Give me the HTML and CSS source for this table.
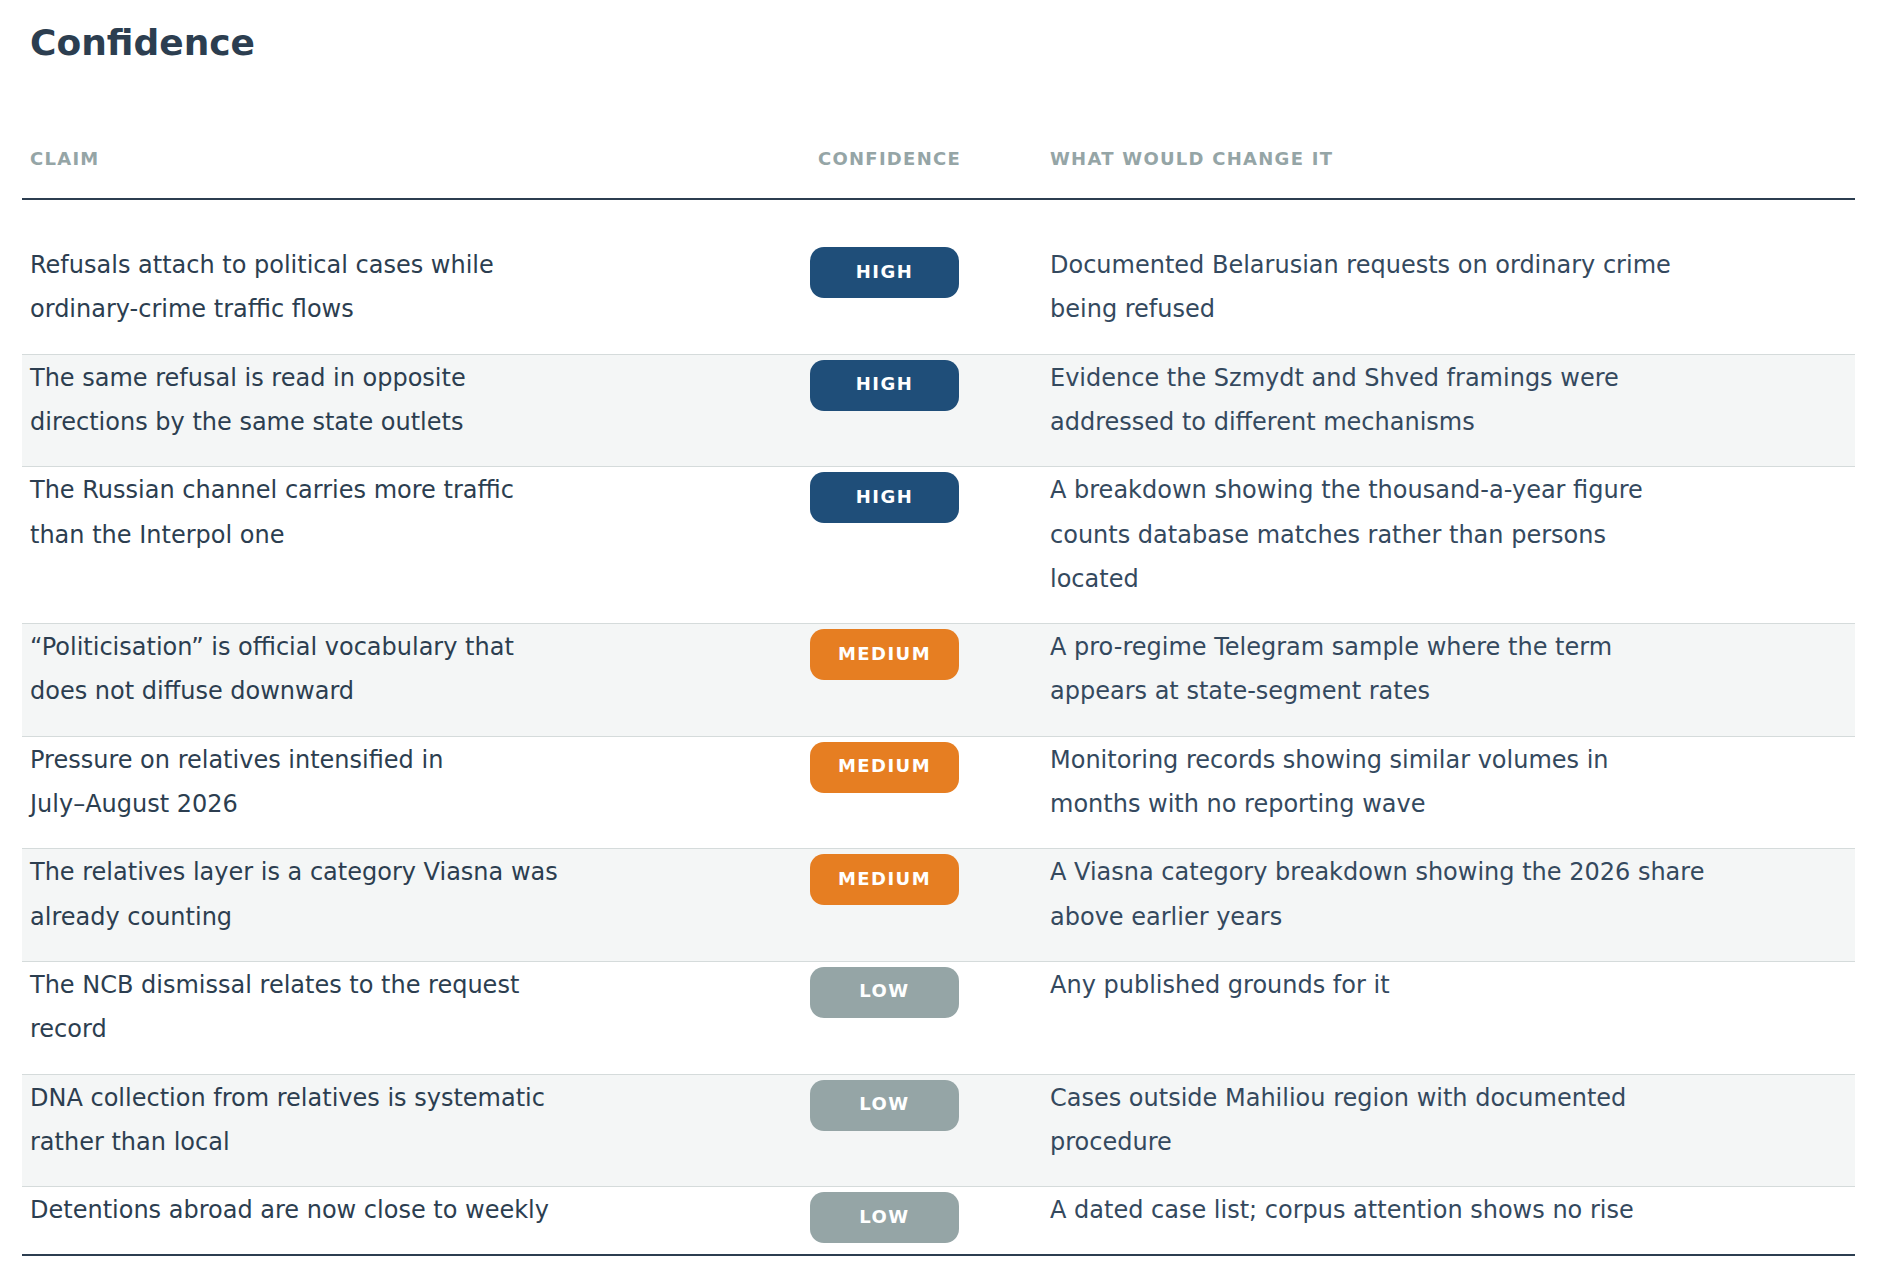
FILE: index.html
```html
<!DOCTYPE html>
<html lang="en">
<head>
<meta charset="utf-8">
<title>Confidence</title>
<link rel="stylesheet" href="styles.css">
</head>
<body>
<div class="page">
  <h1 class="title">Confidence</h1>
  <div class="table">
    <div class="row head">
      <div class="cell">Claim</div>
      <div class="cell">Confidence</div>
      <div class="cell">What would change it</div>
    </div>
    <div class="tbody">
      <div class="row">
        <div class="cell claim"><p class="txt">Refusals attach to political cases while ordinary-crime traffic flows</p></div>
        <div class="cell conf"><span class="badge high">High</span></div>
        <div class="cell change"><p class="txt">Documented Belarusian requests on ordinary crime being refused</p></div>
      </div>
      <div class="row">
        <div class="cell claim"><p class="txt">The same refusal is read in opposite directions by the same state outlets</p></div>
        <div class="cell conf"><span class="badge high">High</span></div>
        <div class="cell change"><p class="txt">Evidence the Szmydt and Shved framings were addressed to different mechanisms</p></div>
      </div>
      <div class="row">
        <div class="cell claim"><p class="txt">The Russian channel carries more traffic than the Interpol one</p></div>
        <div class="cell conf"><span class="badge high">High</span></div>
        <div class="cell change"><p class="txt">A breakdown showing the thousand-a-year figure counts database matches rather than persons<br>located</p></div>
      </div>
      <div class="row">
        <div class="cell claim"><p class="txt">“Politicisation” is official vocabulary that does not diffuse downward</p></div>
        <div class="cell conf"><span class="badge medium">Medium</span></div>
        <div class="cell change"><p class="txt">A pro-regime Telegram sample where the term appears at state-segment rates</p></div>
      </div>
      <div class="row">
        <div class="cell claim"><p class="txt">Pressure on relatives intensified in <span class="nowrap">July–August</span> 2026</p></div>
        <div class="cell conf"><span class="badge medium">Medium</span></div>
        <div class="cell change"><p class="txt">Monitoring records showing similar volumes in<br>months with no reporting wave</p></div>
      </div>
      <div class="row">
        <div class="cell claim"><p class="txt">The relatives layer is a category Viasna was already counting</p></div>
        <div class="cell conf"><span class="badge medium">Medium</span></div>
        <div class="cell change"><p class="txt">A Viasna category breakdown showing the 2026 share above earlier years</p></div>
      </div>
      <div class="row">
        <div class="cell claim"><p class="txt">The NCB dismissal relates to the request record</p></div>
        <div class="cell conf"><span class="badge low">Low</span></div>
        <div class="cell change"><p class="txt">Any published grounds for it</p></div>
      </div>
      <div class="row">
        <div class="cell claim"><p class="txt">DNA collection from relatives is systematic rather than local</p></div>
        <div class="cell conf"><span class="badge low">Low</span></div>
        <div class="cell change"><p class="txt">Cases outside Mahiliou region with documented procedure</p></div>
      </div>
      <div class="row">
        <div class="cell claim"><p class="txt">Detentions abroad are now close to weekly</p></div>
        <div class="cell conf"><span class="badge low">Low</span></div>
        <div class="cell change"><p class="txt">A dated case list; corpus attention shows no rise</p></div>
      </div>
    </div>
  </div>
</div>
</body>
</html>
```
FILE: styles.css
```css
html, body {
  margin: 0;
  padding: 0;
  background: #ffffff;
}

body {
  font-family: "DejaVu Sans", Verdana, sans-serif;
  color: #2c3e50;
}

.page {
  padding: 21.5px 35px 20px 22px;
}

.title {
  margin: 0 0 56px;
  padding-left: 8px;
  font-size: 36px;
  line-height: 42px;
  font-weight: 700;
  color: #2c3e50;
}

.row {
  display: grid;
  grid-template-columns: 788px 232px 1fr;
}

.head {
  border-bottom: 2px solid #2c3e50;
}

.head .cell {
  padding: 28.8px 8px;
  font-size: 18px;
  line-height: 21px;
  font-weight: 700;
  letter-spacing: 0.07em;
  text-transform: uppercase;
  color: #95a5a6;
}

.tbody .row {
  border-top: 1px solid #d5dbdb;
}

.tbody .row:first-child {
  border-top: none;
}

.tbody .row:nth-child(even) {
  background: #f4f6f6;
}

.tbody .row:last-child {
  border-bottom: 2px solid #2c3e50;
}

.tbody .cell {
  padding: 1px 8px 22px;
  font-size: 24px;
  line-height: 44.3px;
}

.tbody .row:first-child .cell {
  padding-top: 43px;
}

.txt {
  margin: 0;
}

.nowrap {
  white-space: nowrap;
}

.claim .txt {
  max-width: 540px;
  color: #2c3e50;
}

.change .txt {
  max-width: 656.8px;
  color: #34495e;
}

.tbody .conf {
  padding-left: 0;
  padding-bottom: 0;
}

.badge {
  display: flex;
  align-items: center;
  justify-content: center;
  box-sizing: border-box;
  width: 149px;
  height: 51px;
  margin-top: 4px;
  padding-bottom: 2px;
  border-radius: 14px;
  color: #ffffff;
  font-size: 18px;
  line-height: 1;
  font-weight: 700;
  letter-spacing: 0.08em;
  text-transform: uppercase;
}

.badge.high {
  background: #1f4e79;
}

.badge.medium {
  background: #e67e22;
}

.badge.low {
  background: #95a5a6;
}
```
